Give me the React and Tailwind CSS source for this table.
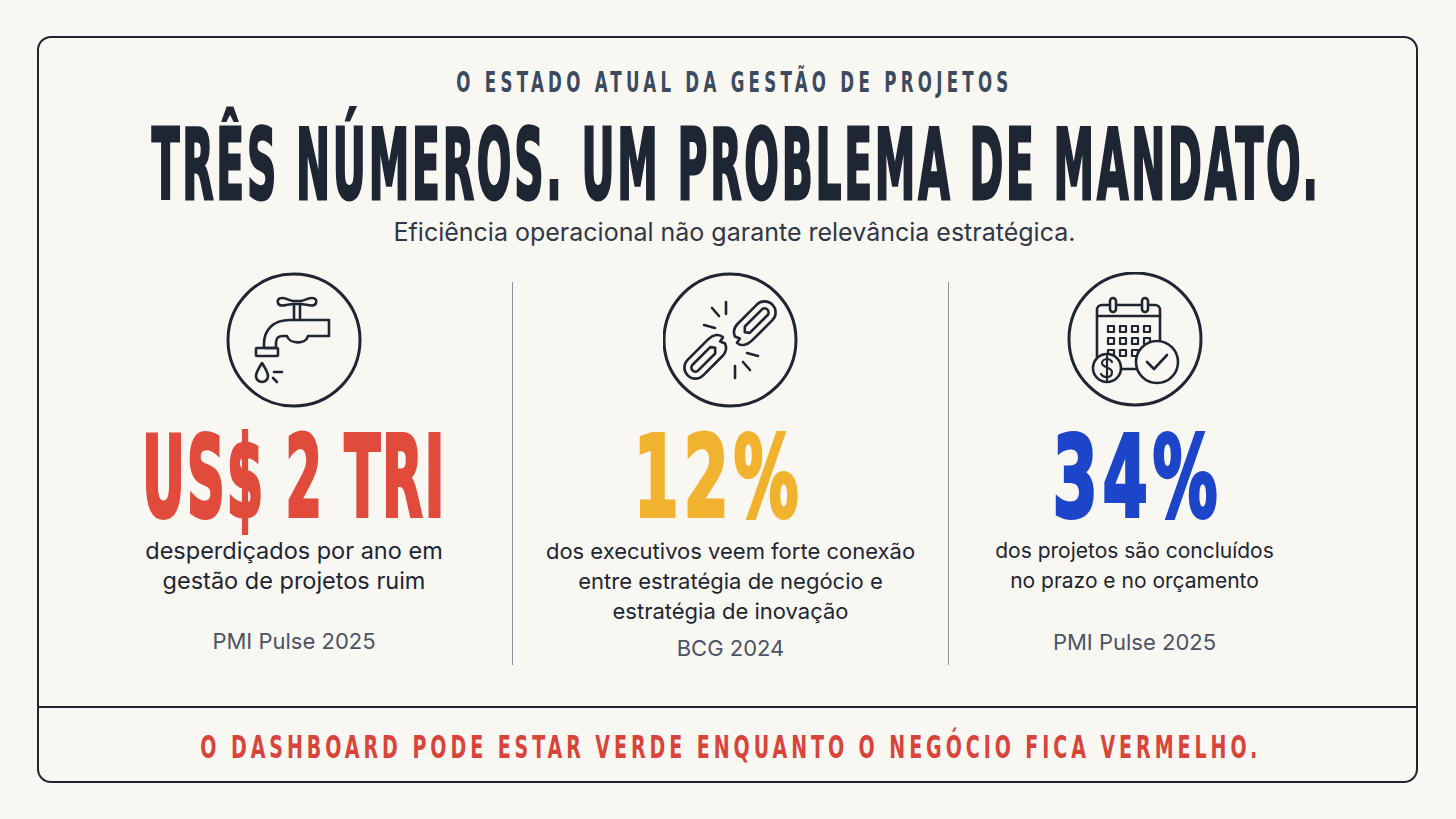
import React from "react"

const DISPLAY = "font-['DejaVu_Sans_Condensed','DejaVu_Sans',sans-serif] font-bold"
const BODY = "font-['Inter','Liberation_Sans',sans-serif]"

const FaucetIcon = () => (
  <svg viewBox="0 0 136 136" className="w-[136px] h-[136px]" fill="none" stroke="#1e2533" strokeWidth="2.6" strokeLinejoin="round" strokeLinecap="round">
    <circle cx="68" cy="68" r="66" strokeWidth="3" />
    {/* handle */}
    <path d="M56 26 C52 26 51 29 52 31 C53 34 56 34 60 33 L67 32 H75 L82 33 C86 34 89 34 90 31 C91 29 90 26 86 26 C82 26 80 28 75 29 H67 C62 28 60 26 56 26 Z" />
    <path d="M68 33 V48 M74 33 V48" />
    {/* body and spout */}
    <path d="M103 48 H64 C47 48 38 58 38 72 V76 H50 V71 C50 66 52 64 57 64 H61 C63 72 80 73 82 64 H103 Z" />
    <rect x="30" y="76" width="22" height="8" rx="1" />
    {/* drop and splash */}
    <path d="M36 91 C33 96 30 100 30 104 A6 6 0 0 0 42 104 C42 100 39 96 36 91 Z" />
    <path d="M48 100 H56 M47 106 L51 110" />
  </svg>
)

const Link = ({ transform }) => (
  <g transform={transform}>
    <path d="M-12 -11 H15 A11 11 0 0 1 15 11 H-14 C-21 11 -26 7 -26 2 L-21 1 L-23 -4 C-21 -9 -17 -11 -12 -11 Z" />
    <path d="M-9 -4 H15 A4 4 0 0 1 15 4 H-10 L-13 0 Z" />
  </g>
)

const ChainIcon = () => (
  <svg viewBox="0 0 136 136" className="w-[136px] h-[136px]" fill="none" stroke="#1e2533" strokeWidth="2.6" strokeLinejoin="round" strokeLinecap="round">
    <circle cx="67" cy="68" r="66" strokeWidth="3" />
    <Link transform="translate(91 51) rotate(-45)" />
    <Link transform="translate(43 85) rotate(135)" />
    {/* sparks */}
    <path d="M63 30 V42 M49 36 L56 44 M41 53 L52 56" />
    <path d="M72 94 V106 M80 90 L87 98 M84 81 L95 84" />
  </svg>
)

const CalendarIcon = () => (
  <svg viewBox="0 0 136 136" className="w-[136px] h-[136px]" fill="none" stroke="#1e2533" strokeWidth="2.6" strokeLinejoin="round" strokeLinecap="round">
    <circle cx="68" cy="67" r="66" strokeWidth="3" />
    <rect x="30" y="33" width="63" height="64" rx="5" />
    <path d="M30 44 H93" />
    <rect x="43" y="26" width="6" height="14" rx="3" fill="#f9f7f2" />
    <rect x="75" y="26" width="6" height="14" rx="3" fill="#f9f7f2" />
    <g strokeWidth="2.2">
      {[41, 53, 65, 77].map((x) =>
        [54, 66, 78].map((y) => <rect key={`${x}-${y}`} x={x} y={y} width="6" height="6" />)
      )}
    </g>
    <circle cx="40" cy="96" r="14" fill="#f9f7f2" />
    <path d="M45 90 C44 88 42 87 40 87 C37 87 35 89 35 91 C35 96 45 95 45 100 C45 103 43 105 40 105 C37 105 35 104 34 102 M40 84 V108" strokeWidth="2.2" />
    <circle cx="90" cy="90" r="21" fill="#f9f7f2" />
    <path d="M80 90 L87 97 L100 83" />
  </svg>
)

const stats = [
  {
    icon: <FaucetIcon />,
    value: "US$ 2 TRI",
    color: "text-[#e14b3c]",
    valueFit: "tracking-[4px] scale-x-[0.52]",
    shift: "",
    lines: ["desperdiçados por ano em", "gestão de projetos ruim"],
    textSize: "text-[23.5px]",
    source: "PMI Pulse 2025",
    sourceGap: "mt-[31px]",
  },
  {
    icon: <ChainIcon />,
    value: "12%",
    color: "text-[#f1b32f]",
    valueFit: "tracking-[8px] scale-x-[0.64]",
    shift: "mr-[24px]",
    lines: ["dos executivos veem forte conexão", "entre estratégia de negócio e", "estratégia de inovação"],
    textSize: "text-[22px]",
    source: "BCG 2024",
    sourceGap: "mt-[8px]",
  },
  {
    icon: <CalendarIcon />,
    value: "34%",
    color: "text-[#1c45c9]",
    valueFit: "tracking-[8px] scale-x-[0.64]",
    shift: "ml-[6px]",
    lines: ["dos projetos são concluídos", "no prazo e no orçamento"],
    textSize: "text-[21px]",
    source: "PMI Pulse 2025",
    sourceGap: "mt-[32px]",
  },
]

const StatColumn = ({ stat }) => (
  <div className="flex flex-col items-center">
    {stat.icon}
    <div className={`mt-[13px] h-[112px] flex justify-center ${stat.shift} ${stat.color}`}>
      <span
        className={`${DISPLAY} ${stat.valueFit} inline-block whitespace-nowrap text-[112px] leading-none [-webkit-text-stroke:4px_currentColor]`}
      >
        {stat.value}
      </span>
    </div>
    <div className={`${BODY} ${stat.textSize} mt-[3px] leading-[30px] text-[#1e2533] text-center whitespace-nowrap`}>
      {stat.lines.map((l) => (
        <div key={l}>{l}</div>
      ))}
    </div>
    <div className={`${BODY} ${stat.sourceGap} text-[22px] leading-[28px] text-[#4a5465]`}>{stat.source}</div>
  </div>
)

export default function App() {
  return (
    <div className="w-[1456px] h-[819px] bg-[#f9f7f2] pt-[36px] pl-[37px] overflow-hidden">
      <div className="w-[1381px] h-[747px] border-2 border-[#1e2533] rounded-[14px] flex flex-col">
        <div className="flex-1 flex flex-col items-center pt-[31px]">
          <div className="h-[28px] flex justify-center ml-[14px]">
            <span className={`${DISPLAY} inline-block whitespace-nowrap text-[28px] leading-none tracking-[6.5px] text-[#3b4a5e] scale-x-[0.66]`}>
              O ESTADO ATUAL DA GESTÃO DE PROJETOS
            </span>
          </div>
          <div className="mt-[19px] h-[98px] flex justify-center ml-[18px]">
            <span className={`${DISPLAY} inline-block whitespace-nowrap text-[98px] leading-none tracking-[6px] text-[#1e2533] scale-x-[0.462] [-webkit-text-stroke:3px_#1e2533]`}>
              TRÊS NÚMEROS. UM PROBLEMA DE MANDATO.
            </span>
          </div>
          <p className={`${BODY} mt-[3px] ml-[14px] text-[25px] leading-[30px] text-[#2f3746]`}>
            Eficiência operacional não garante relevância estratégica.
          </p>
          <div className="mt-[25px] self-stretch pl-[37px] grid grid-cols-[436px_1px_435px_1px_371px]">
            <StatColumn stat={stats[0]} />
            <div className="mt-[10px] h-[383px] bg-[#8d9099]" />
            <StatColumn stat={stats[1]} />
            <div className="mt-[10px] h-[383px] bg-[#8d9099]" />
            <StatColumn stat={stats[2]} />
          </div>
        </div>
        <div className="h-[75px] border-t-2 border-[#1e2533] flex items-center justify-center pt-[4px] pl-[6px]">
          <span className={`${DISPLAY} inline-block whitespace-nowrap text-[32px] leading-none tracking-[6px] text-[#d9443a] scale-x-[0.66]`}>
            O DASHBOARD PODE ESTAR VERDE ENQUANTO O NEGÓCIO FICA VERMELHO.
          </span>
        </div>
      </div>
    </div>
  )
}
